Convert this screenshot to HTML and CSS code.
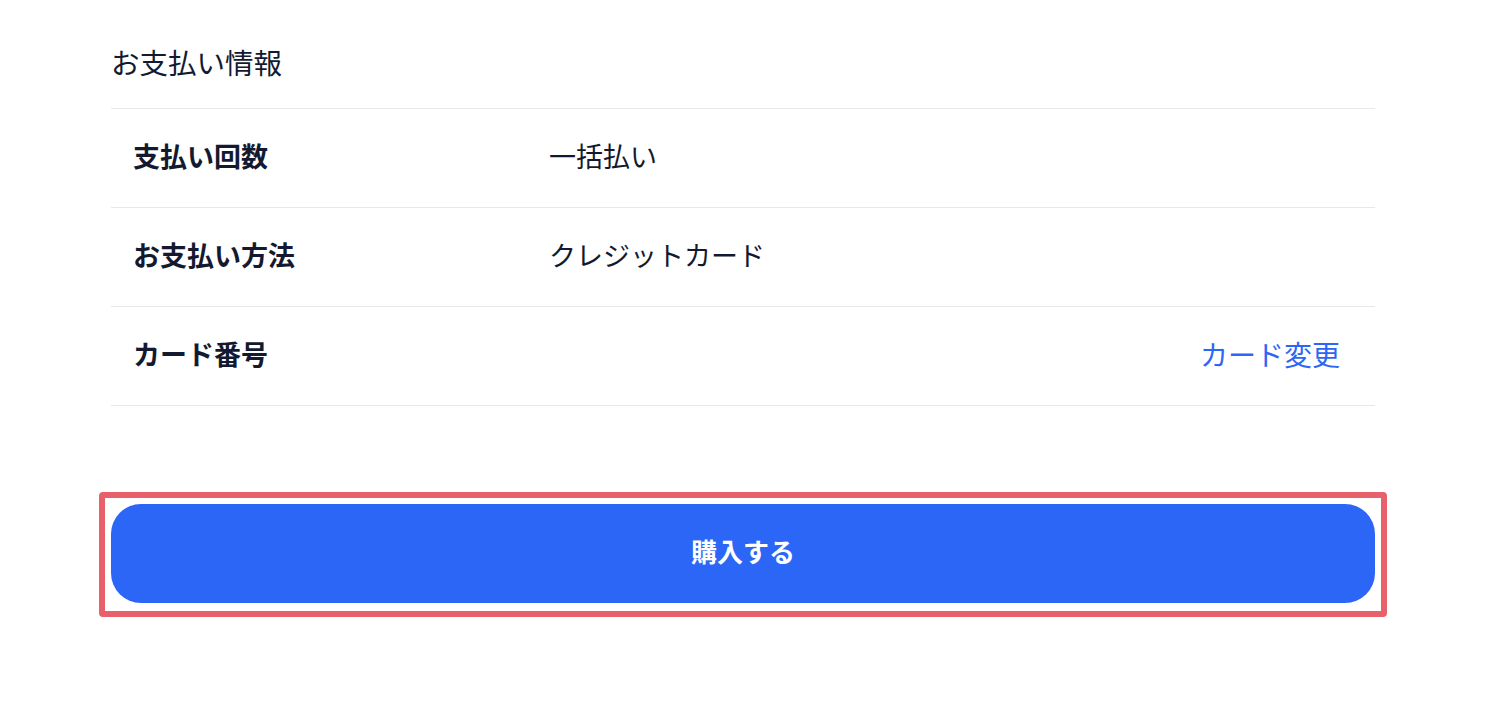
FILE: index.html
```html
<!DOCTYPE html>
<html lang="ja">
<head>
<meta charset="utf-8">
<link rel="stylesheet" href="styles.css">
</head>
<body>
<main class="page">
  <h2 class="section-title">お支払い情報</h2>
  <div class="info-row">
    <div class="label">支払い回数</div>
    <div class="value">一括払い</div>
  </div>
  <div class="info-row">
    <div class="label">お支払い方法</div>
    <div class="value">クレジットカード</div>
  </div>
  <div class="info-row">
    <div class="label">カード番号</div>
    <div class="value"></div>
    <a class="change-link" href="#">カード変更</a>
  </div>
  <div class="highlight">
    <button class="buy-button" type="button">購入する</button>
  </div>
</main>
</body>
</html>
```
FILE: styles.css
```css
html, body {
  margin: 0;
  padding: 0;
  background: #ffffff;
}
body {
  font-family: "Noto Sans CJK JP", "Noto Sans", sans-serif;
  color: #131a30;
}
.page {
  width: 1264px;
  margin-left: 111px;
}
.section-title {
  margin: 0;
  padding: 44px 0 28px;
  font-size: 28.5px;
  line-height: 36px;
  font-weight: 400;
  border-bottom: 1px solid #e8e8e6;
}
.info-row {
  display: flex;
  align-items: center;
  box-sizing: border-box;
  height: 99px;
  padding: 0 35px 5px 22px;
  border-bottom: 1px solid #e8e8e6;
  font-size: 27px;
}
.label {
  width: 416px;
  font-weight: 700;
}
.value {
  flex: 1;
  font-weight: 400;
}
.change-link {
  color: #2d66f5;
  text-decoration: none;
  font-size: 28px;
}
.highlight {
  margin: 86px -12px 0;
  padding: 6px 6px 8px;
  border: 6px solid #e8606a;
  border-radius: 4px;
}
.buy-button {
  display: block;
  width: 100%;
  height: 99px;
  padding: 0 0 6px;
  border: none;
  border-radius: 30px;
  background: #2b66f6;
  color: #ffffff;
  font-family: "Noto Sans CJK JP", "Noto Sans", sans-serif;
  font-size: 26px;
  font-weight: 700;
  cursor: pointer;
}
```
